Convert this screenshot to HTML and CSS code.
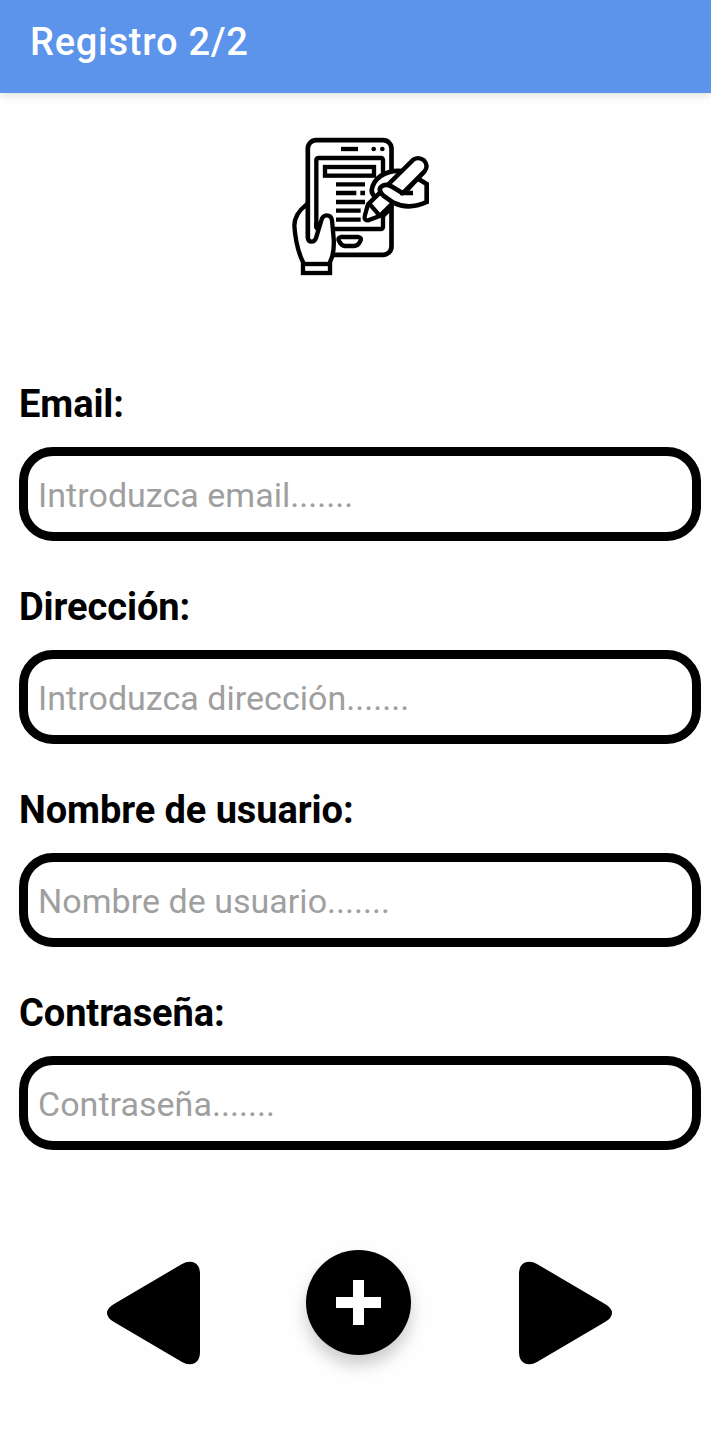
FILE: index.html
```html
<!DOCTYPE html>
<html lang="es">
<head>
<meta charset="utf-8">
<title>Registro 2/2</title>
<link rel="stylesheet" href="styles.css">
</head>
<body>
<header class="appbar"><h1 class="appbar-title">Registro 2/2</h1></header>
<main class="content">
  <svg class="hero" viewBox="0 0 480 480" fill="none" stroke="#000" stroke-width="13" stroke-linejoin="round">
    <rect x="83.500" y="45.500" width="251" height="344" rx="25" fill="#fff" stroke-width="14"/>
    <rect x="109" y="99" width="200" height="213" rx="6"/>
    <path d="M183 72H234"/>
    <circle cx="281" cy="72" r="7" fill="#000" stroke="none"/>
    <circle cx="307" cy="72" r="7" fill="#000" stroke="none"/>
    <rect x="135" y="126" width="147" height="26" stroke-linejoin="miter"/>
    <path d="M168 178H255M168 204H229M241 204H255M168 231H255M168 257H242M168 284H242" stroke-width="13"/>
    <path d="M182 336H236Q246 338 241 348Q234 363 222 363H195Q184 362 177 348Q172 338 182 336Z"/>
    <path d="M76 238Q43 267 43 302Q48 371 70 413H149Q164 385 161 340L156 286Q153 270 140 271Q127 272 124 286L108 339Q104 350 94 350Q83 349 83 337V235Z" fill="#fff" stroke="none"/>
    <path d="M80 238Q43 267 43 302Q48 371 70 413M83 230V337Q84 350 95 350Q104 350 108 339L124 286Q128 271 140 271Q154 271 156 286L161 340Q164 385 149 413M109 290V306L117 312"/>
    <rect x="69" y="417" width="81" height="27" fill="#fff" stroke-linejoin="miter"/>
    <path d="M360 137Q328 134 302 153Q278 170 275 196Q275 208 285 214L340 234Q386 256 440 231V176L415 157Z" fill="#fff" stroke="none"/>
    <path d="M365 138Q328 135 302 153Q278 170 275 196Q275 208 286 215" stroke-width="14"/>
    <path d="M264 238L400 104Q416 94 432 106Q446 122 434 139L299 273L265 286Q250 287 255 270Z" fill="#fff"/>
    <path d="M267 235L299 272"/>
    <path d="M306 210Q292 193 306 183Q317 175 334 184L373 206H398V199L410 170L440 177V231Q386 258 340 234Z" fill="#fff" stroke="none"/>
    <path d="M309 211Q292 193 305 184Q317 175 334 184L372 207M360 204H399M309 211L340 233Q386 256 440 231V177L412 160" stroke-width="14" stroke-linejoin="miter"/>
    <path d="M372 205L434 139" stroke-width="13"/>
    <path d="M321 250L340 234V252L309 282V262Z" fill="#000" stroke="none"/>
  </svg>
  <form class="form">
    <div class="field"><label class="label" for="email">Email:</label><input class="input" id="email" type="text" placeholder="Introduzca email......."></div>
    <div class="field"><label class="label" for="address">Dirección:</label><input class="input" id="address" type="text" placeholder="Introduzca dirección......."></div>
    <div class="field"><label class="label" for="user">Nombre de usuario:</label><input class="input" id="user" type="text" placeholder="Nombre de usuario......."></div>
    <div class="field"><label class="label" for="password">Contraseña:</label><input class="input" id="password" type="text" placeholder="Contraseña......."></div>
  </form>
  <nav class="actions">
    <button class="arrow" aria-label="Anterior"><svg width="94" height="104" viewBox="0 0 94 104"><path d="M75 3Q82-1 88 2Q93 5 93 13V91Q93 99 88 102Q82 105 75 101L7 61Q0 57 0 52Q0 47 7 43Z"/></svg></button>
    <button class="add" aria-label="Añadir"><svg width="45" height="45" viewBox="0 0 45 45"><path d="M17 0H28V17H45V28H28V45H17V28H0V17H17Z" fill="#fff"/></svg></button>
    <button class="arrow" aria-label="Siguiente"><svg width="94" height="104" viewBox="0 0 94 104"><path d="M18 3Q11-1 5 2Q0 5 0 13V91Q0 99 5 102Q11 105 18 101L86 61Q93 57 93 52Q93 47 86 43Z"/></svg></button>
  </nav>
</main>
</body>
</html>
```
FILE: styles.css
```css
* { box-sizing: border-box; }
body { margin: 0; min-height: 100vh; background: #fefefe; color: #000; font-family: Roboto, sans-serif; }
.appbar { height: 93px; padding: 20px 30px 0; background: #5b94ea; box-shadow: 0 2px 8px rgba(0, 0, 0, .14); }
.appbar-title { margin: 0; font-size: 38px; line-height: 45px; font-weight: 500; letter-spacing: .75px; color: #fff; }
.content { display: flex; flex-direction: column; padding: 32px 10px 60px 19px; }
.hero { display: block; width: 160px; height: 160px; margin-left: 261px; }
.form { display: flex; flex-direction: column; gap: 44px; margin-top: 97px; }
.field { display: flex; flex-direction: column; gap: 20px; }
.label { font-size: 38px; line-height: 45px; font-weight: 700; height: 45px; letter-spacing: -.08px; }
.input { width: 100%; height: 94px; margin: 0; padding: 1px 10px 0; border: 9px solid #000; border-radius: 34px; background: #fff; font: 400 34px Roboto, sans-serif; letter-spacing: .03px; outline: 0; }
.input::placeholder { color: #9f9f9f; opacity: 1; }
.actions { display: flex; align-items: flex-start; margin: 100px 0 0 88px; }
.arrow { display: flex; margin-top: 11px; padding: 0; border: 0; background: none; }
.add { display: flex; align-items: center; justify-content: center; width: 105px; height: 105px; margin: 0 108px 0 105px; padding: 0; border: 0; border-radius: 50%; background: #000; box-shadow: 0 10px 16px rgba(0, 0, 0, .2); }
```
